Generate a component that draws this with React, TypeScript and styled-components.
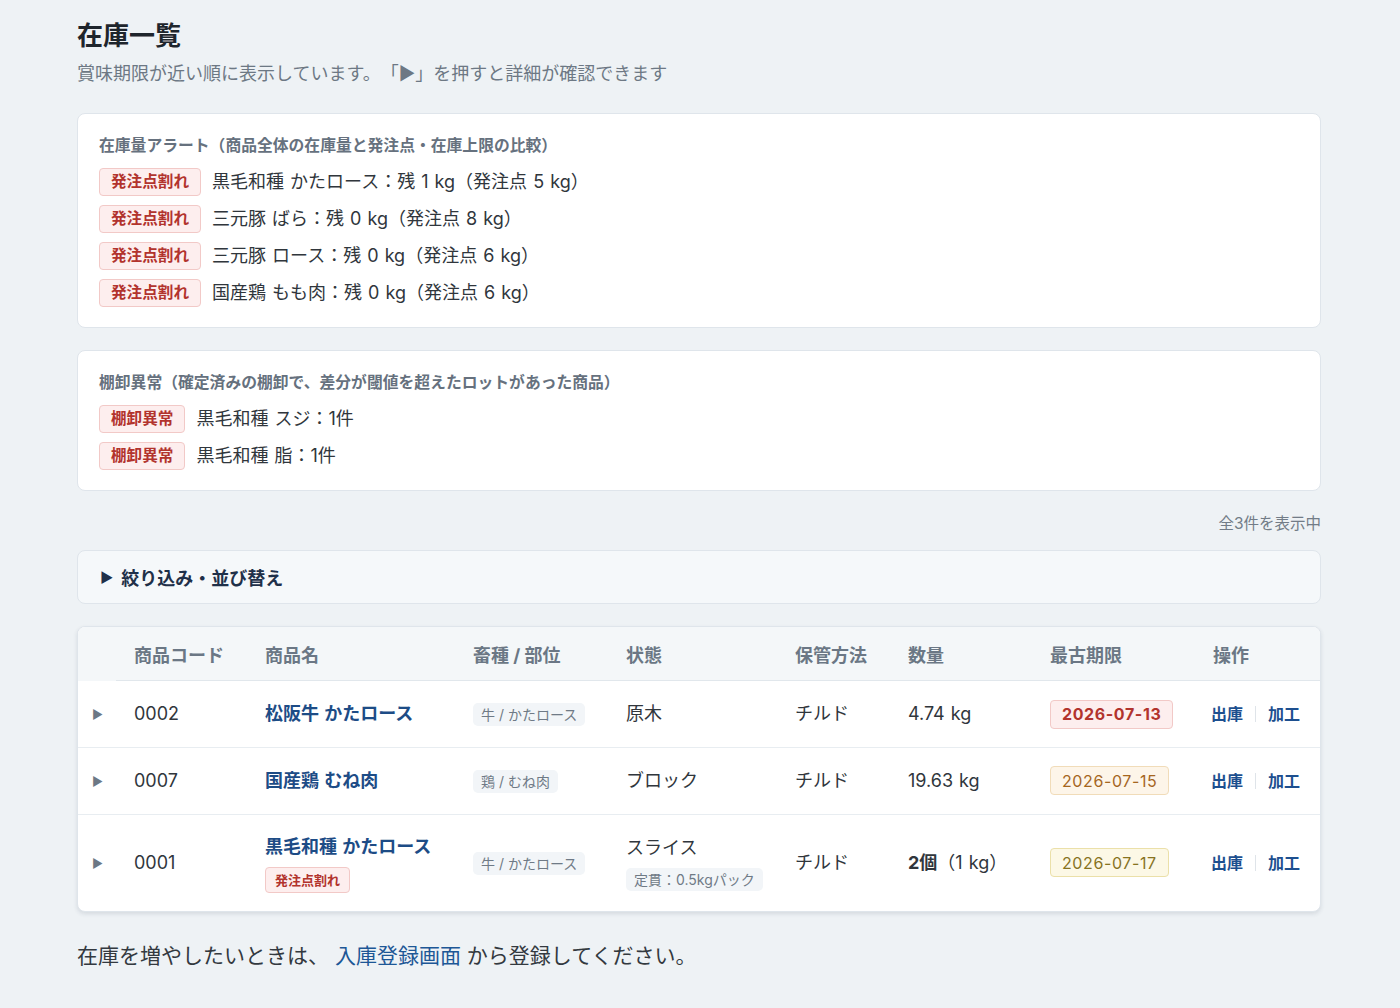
import styled, { createGlobalStyle } from "styled-components";

const GlobalStyle = createGlobalStyle`
    html, body {
        margin: 0;
        padding: 0;
        background: #eef2f5;
        font-family: "Inter", "Noto Sans CJK JP", sans-serif;
        color: #2f353b;
        text-spacing-trim: space-all;
    }
`;

const Page = styled.div`
    width: 1244px;
    margin: 0 auto;
    padding: 18px 0 30px;
    position: relative;
    left: -1px;
`;

const Title = styled.h1`
    font-size: 26px;
    font-weight: 700;
    color: #1e252c;
    margin: 0;
    line-height: 36px;
`;

const Lead = styled.p`
    font-size: 18px;
    color: #6d7884;
    margin: 8px 0 0;
    line-height: 24px;
`;

const Card = styled.section`
    background: #fff;
    border: 1px solid #dfe5eb;
    border-radius: 8px;
    padding: 21px 21px 20px;
    margin-top: 27px;
    display: flex;
    flex-direction: column;
    gap: 9px;
    & + & {
        margin-top: 22px;
    }
`;

const CardTitle = styled.h2`
    font-size: 15.8px;
    font-weight: 700;
    color: #66717e;
    margin: 0 0 2px;
    line-height: 22px;
`;

const AlertRow = styled.div`
    display: flex;
    align-items: center;
    gap: 11px;
    font-size: 18px;
    color: #30363c;
    line-height: 28px;
    word-spacing: 1px;
`;

const RedBadge = styled.span<{ $small?: boolean }>`
    display: inline-flex;
    align-items: center;
    height: ${p => (p.$small ? 24 : 26)}px;
    padding: 0 ${p => (p.$small ? 9 : 11)}px;
    font-size: ${p => (p.$small ? 13 : 15.6)}px;
    font-weight: 700;
    color: #b2332d;
    background: #fdeeee;
    border: 1px solid #f2c9c7;
    border-radius: 4px;
`;

const Count = styled.div`
    text-align: right;
    font-size: 15.5px;
    color: #727c87;
    margin-top: 23px;
    line-height: 20px;
`;

const FilterBar = styled.div`
    margin-top: 16px;
    background: #f5f8fa;
    border: 1px solid #dfe5eb;
    border-radius: 8px;
    height: 52px;
    display: flex;
    align-items: center;
    padding: 0 22px;
    gap: 8px;
    font-size: 18px;
    font-weight: 700;
    color: #1f3049;
`;

const Arrow = styled.span<{ $muted?: boolean }>`
    font-size: ${p => (p.$muted ? 12 : 14)}px;
    color: ${p => (p.$muted ? "#6c7885" : "#1f3049")};
`;

const TableWrap = styled.div`
    margin-top: 22px;
    background: #fff;
    border: 1px solid #dfe5eb;
    border-radius: 8px;
    overflow: hidden;
    box-shadow: 0 2px 4px rgba(30, 50, 70, 0.12);
`;

const Table = styled.table`
    width: 100%;
    border-collapse: collapse;
    table-layout: fixed;
`;

const Th = styled.th`
    background: #f4f7f9;
    height: 53px;
    padding: 0 0 0 18px;
    text-align: left;
    font-size: 18px;
    font-weight: 700;
    color: #6b7785;
    border-bottom: 1px solid #e1e7ec;
    &:first-child {
        border-bottom: none;
    }
`;

const Row = styled.tr`
    & + & td {
        border-top: 1px solid #e8edf1;
    }
`;

const Td = styled.td`
    padding: 18px 0 18px 18px;
    font-size: 18px;
    color: #30363c;
    vertical-align: middle;
    line-height: 28px;
    word-spacing: 1px;
    &:first-child {
        padding-left: 14px;
    }
`;

const Stack = styled.div`
    display: flex;
    flex-direction: column;
    align-items: flex-start;
    gap: 6px;
`;

const NameLink = styled.a`
    font-weight: 700;
    color: #1d4c86;
    text-decoration: none;
`;

const Tag = styled.span`
    display: inline-block;
    background: #f2f5f8;
    color: #6f7a86;
    font-size: 14px;
    line-height: 23px;
    padding: 0 8px;
    border-radius: 5px;
    vertical-align: middle;
    word-spacing: 0;
`;

const Strong = styled.b`
    font-weight: 700;
`;

const DateBadge = styled.span<{ $tone: "red" | "orange" | "yellow" }>`
    display: inline-flex;
    align-items: center;
    vertical-align: middle;
    height: 27px;
    padding: 0 11px;
    border-radius: 4px;
    font-size: 16px;
    letter-spacing: 0.6px;
    font-weight: ${p => (p.$tone === "red" ? 700 : 400)};
    color: ${p => ({ red: "#b2332d", orange: "#a5661f", yellow: "#87731f" }[p.$tone])};
    background: ${p => ({ red: "#fdeeee", orange: "#fdf5e9", yellow: "#fcf8e6" }[p.$tone])};
    border: 1px solid ${p => ({ red: "#f2c9c7", orange: "#f1dcb9", yellow: "#ebe0a9" }[p.$tone])};
`;

const Actions = styled.div`
    display: flex;
    align-items: center;
    gap: 12px;
    font-size: 16px;
    font-weight: 700;
    margin-left: -2px;
`;

const ActionLink = styled.a`
    color: #1d4f8f;
    text-decoration: none;
`;

const Sep = styled.span`
    width: 1px;
    height: 16px;
    background: #dfe4e9;
`;

const Footer = styled.p`
    margin: 30px 0 0;
    font-size: 21px;
    color: #33393f;
    line-height: 28px;
    a {
        color: #1d5796;
        text-decoration: none;
    }
`;

interface IItem {
    code: string;
    name: string;
    lowStock?: boolean;
    part: string;
    state: string;
    stateNote?: string;
    storage: string;
    qty: React.ReactNode;
    date: string;
    tone: "red" | "orange" | "yellow";
}

const stockAlerts = [
    "黒毛和種 かたロース：残 1 kg（発注点 5 kg）",
    "三元豚 ばら：残 0 kg（発注点 8 kg）",
    "三元豚 ロース：残 0 kg（発注点 6 kg）",
    "国産鶏 もも肉：残 0 kg（発注点 6 kg）",
];

const countAlerts = ["黒毛和種 スジ：1件", "黒毛和種 脂：1件"];

const items: IItem[] = [
    { code: "0002", name: "松阪牛 かたロース", part: "牛 / かたロース", state: "原木", storage: "チルド", qty: "4.74 kg", date: "2026-07-13", tone: "red" },
    { code: "0007", name: "国産鶏 むね肉", part: "鶏 / むね肉", state: "ブロック", storage: "チルド", qty: "19.63 kg", date: "2026-07-15", tone: "orange" },
    {
        code: "0001", name: "黒毛和種 かたロース", lowStock: true, part: "牛 / かたロース", state: "スライス", stateNote: "定貫：0.5kgパック", storage: "チルド",
        qty: <><Strong>2個</Strong>（1 kg）</>, date: "2026-07-17", tone: "yellow",
    },
];

const columns = [38, 131, 208, 153, 169, 113, 142, 163, 126];
const headers = ["", "商品コード", "商品名", "畜種 / 部位", "状態", "保管方法", "数量", "最古期限", "操作"];

function App() {
    return (
        <>
            <GlobalStyle />
            <Page>
                <Title>在庫一覧</Title>
                <Lead>賞味期限が近い順に表示しています。「▶」を押すと詳細が確認できます</Lead>

                <Card>
                    <CardTitle>在庫量アラート（商品全体の在庫量と発注点・在庫上限の比較）</CardTitle>
                    {stockAlerts.map(text => (
                        <AlertRow key={text}>
                            <RedBadge>発注点割れ</RedBadge>
                            {text}
                        </AlertRow>
                    ))}
                </Card>

                <Card>
                    <CardTitle>棚卸異常（確定済みの棚卸で、差分が閾値を超えたロットがあった商品）</CardTitle>
                    {countAlerts.map(text => (
                        <AlertRow key={text}>
                            <RedBadge>棚卸異常</RedBadge>
                            {text}
                        </AlertRow>
                    ))}
                </Card>

                <Count>全3件を表示中</Count>

                <FilterBar>
                    <Arrow>▶</Arrow>
                    絞り込み・並び替え
                </FilterBar>

                <TableWrap>
                    <Table>
                        <colgroup>
                            {columns.map((w, i) => <col key={i} style={{ width: w }} />)}
                        </colgroup>
                        <thead>
                            <tr>
                                {headers.map((h, i) => <Th key={i}>{h}</Th>)}
                            </tr>
                        </thead>
                        <tbody>
                            {items.map(item => (
                                <Row key={item.code}>
                                    <Td><Arrow $muted>▶</Arrow></Td>
                                    <Td>{item.code}</Td>
                                    <Td>
                                        <Stack>
                                            <NameLink href="#">{item.name}</NameLink>
                                            {item.lowStock && <RedBadge $small>発注点割れ</RedBadge>}
                                        </Stack>
                                    </Td>
                                    <Td><Tag>{item.part}</Tag></Td>
                                    <Td>
                                        <Stack>
                                            {item.state}
                                            {item.stateNote && <Tag>{item.stateNote}</Tag>}
                                        </Stack>
                                    </Td>
                                    <Td>{item.storage}</Td>
                                    <Td>{item.qty}</Td>
                                    <Td><DateBadge $tone={item.tone}>{item.date}</DateBadge></Td>
                                    <Td>
                                        <Actions>
                                            <ActionLink href="#">出庫</ActionLink>
                                            <Sep />
                                            <ActionLink href="#">加工</ActionLink>
                                        </Actions>
                                    </Td>
                                </Row>
                            ))}
                        </tbody>
                    </Table>
                </TableWrap>

                <Footer>
                    在庫を増やしたいときは、 <a href="#">入庫登録画面</a> から登録してください。
                </Footer>
            </Page>
        </>
    );
}

export default App;
